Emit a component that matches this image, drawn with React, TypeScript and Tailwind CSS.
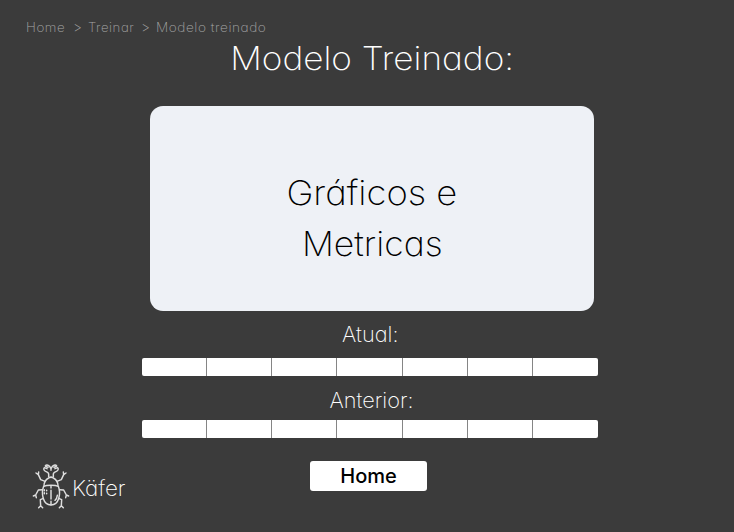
import React from "react";

const FACE = "font-['Inter',sans-serif] whitespace-nowrap [font-feature-settings:'cv11']";

function Beetle() {
  return (
    <svg className="h-[52px] w-[46px] shrink-0" viewBox="0 0 138 156" fill="none" stroke="#dedede" strokeWidth="4.4" strokeLinecap="round" strokeLinejoin="round">
      <path d="M62 53V45C62 41 58 39 53 37C47 34 46 30 49 26L57 29M52 21C55 16 64 17 69 29C74 17 83 16 86 21M52 21L60 25M86 21L78 25M89 26L81 29M89 26C92 30 91 34 85 37C80 39 76 41 76 45V53M69 29V34" />
      <path d="M48 81C48 68 54 61 62 57C66 54 72 54 76 57C84 61 90 68 90 81" />
      <path d="M47 82C56 78 82 78 91 82C99 103 94 137 69 138C44 137 39 103 47 82Z" />
      <path d="M69 82V87M69 94V120M69 127V137M49 92V95M49 101V104M56 94V95M56 103V104M88 109C87 116 85 121 81 124" />
      <path d="M51 67L38 62L31 47L24 42M31 47L32 39M87 67L100 62L107 47L114 42M107 47L106 39" />
      <path d="M43 92L31 93L23 108L16 111M23 108L25 116M95 92L107 93L115 108L122 111M115 108L113 116" />
      <path d="M46 118L37 122L38 140L32 146M38 140L44 146M92 118L101 122L100 140L94 146M100 140L106 146" />
    </svg>
  );
}

function Bar() {
  return (
    <div className="flex h-[18px] w-[456px] overflow-hidden rounded-[2px] bg-white">
      {Array.from({ length: 7 }, (_, i) => (
        <div key={i} className="flex-1 border-r border-[#858585] last:border-r-0" />
      ))}
    </div>
  );
}

export default function App() {
  return (
    <div className="h-[532px] w-[734px] overflow-hidden bg-[#3b3b3b] text-white">
      <nav className={`flex h-10 items-end pl-[26px] pb-[3px] text-[12.5px] font-extralight leading-[18px] text-[#a6a6a6] ${FACE}`}>
        <span className="w-[47px] origin-left scale-x-[1.07] tracking-[0.5px]">Home</span>
        <span className="w-[15px] pb-px text-[14px]">&gt;</span>
        <span className="w-[53px] origin-left scale-x-[1.06] tracking-[0.5px]">Treinar</span>
        <span className="w-[15px] pb-px text-[14px]">&gt;</span>
        <span className="origin-left scale-x-[1.09] tracking-[0.5px]">Modelo treinado</span>
      </nav>
      <h1 className={`flex h-[66px] justify-center pt-px pl-[10px] text-[32.5px] font-[150] leading-[36px] ${FACE}`}>
        <span className="scale-x-[1.082]">Modelo Treinado:</span>
      </h1>
      <section className={`ml-[150px] flex h-[205px] w-[444px] flex-col items-center rounded-[13px] bg-[#eef1f6] pt-[61px] text-[34px] font-[150] leading-[51px] text-black ${FACE}`}>
        <span className="scale-x-[1.07]">Gráficos e</span>
        <span className="scale-x-[1.045]">Metricas</span>
      </section>
      <div className="ml-[141.5px] flex w-[456px] flex-col items-center">
        <h2 className={`ml-[2px] h-[47px] scale-x-[1.035] pt-[9px] text-[21px] font-extralight leading-[30px] ${FACE}`}>Atual:</h2>
        <Bar />
        <h2 className={`ml-[4px] h-[43.5px] scale-x-[1.035] pt-[9.5px] text-[21px] font-extralight leading-[30px] ${FACE}`}>Anterior:</h2>
        <Bar />
      </div>
      <div className="flex">
        <div className="flex w-[310px] items-start pl-[28px] pt-[21.5px]">
          <Beetle />
          <span className={`-ml-[2px] origin-left scale-x-[1.065] pt-[15px] text-[21px] font-extralight leading-[30px] ${FACE}`}>Käfer</span>
        </div>
        <button className="mt-[23px] flex h-[30px] w-[117px] items-center justify-center rounded-[3px] bg-white font-['Inter',sans-serif] text-[20px] font-medium leading-[30px] text-black">Home</button>
      </div>
    </div>
  );
}
